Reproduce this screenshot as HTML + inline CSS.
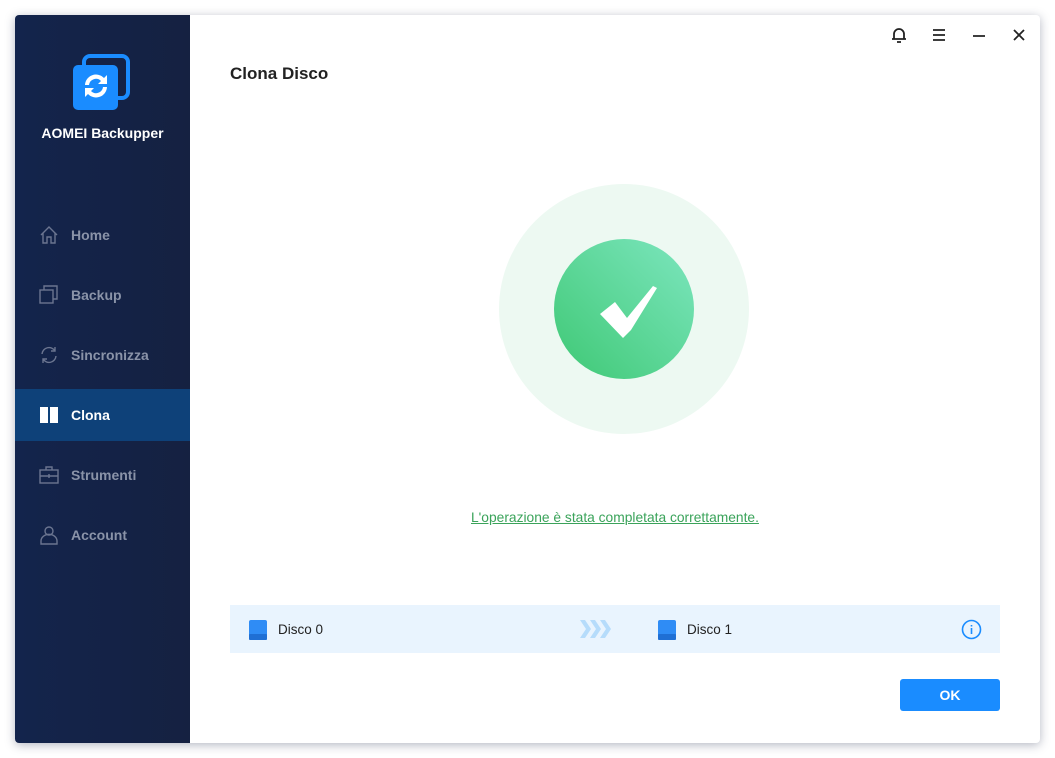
<!DOCTYPE html>
<html><head><meta charset="utf-8"><style>
*{margin:0;padding:0;box-sizing:border-box}
body{width:1055px;height:758px;background:#fff;font-family:"Liberation Sans",sans-serif;position:relative;overflow:hidden}
.win{position:absolute;left:15px;top:15px;width:1025px;height:728px;background:#fff;border-radius:4px;box-shadow:0 2px 10px rgba(40,50,80,.35);overflow:hidden}
.side{position:absolute;left:0;top:0;width:175px;height:728px;background:linear-gradient(90deg,#13244c,#152141)}
.brand{position:absolute;top:110px;left:0;width:175px;text-align:center;color:#fff;font-weight:bold;font-size:14px}
.item{position:absolute;left:0;width:175px;height:52px;color:#8a93a8;font-size:14px;font-weight:bold;line-height:52px;padding-left:56px}
.item svg{position:absolute;left:24px;top:16px}
.item.act{background:#0e4179;color:#fff}
.title{position:absolute;left:215px;top:49px;font-size:17px;font-weight:bold;color:#222}
.ctl{position:absolute;top:11px}
.msg{position:absolute;left:456px;top:495px;font-size:13.8px;color:#3aa35a;text-decoration:underline}
.bar{position:absolute;left:215px;top:590px;width:770px;height:48px;background:#e9f4fe}
.bar span{position:absolute;top:17px;font-size:13.5px;color:#222}
.ok{position:absolute;left:885px;top:664px;width:100px;height:32px;background:#1a8cff;border-radius:3px;color:#fff;font-weight:bold;font-size:14px;text-align:center;line-height:32px}
</style></head><body>
<div class="win">
<div class="side">
<svg style="position:absolute;left:58px;top:39px" width="58" height="58" viewBox="0 0 58 58">
<rect x="11" y="2" width="44" height="42" rx="6" fill="none" stroke="#1a8cff" stroke-width="4"/>
<rect x="0" y="11" width="45" height="45" rx="5" fill="#1a8cff"/>
<path d="M12 31a11 11 0 0 1 19-7l3-3v9h-9l3-3a7 7 0 0 0-12 4z" fill="#fff"/>
<path d="M34 33a11 11 0 0 1-19 7l-3 3v-9h9l-3 3a7 7 0 0 0 12-4z" fill="#fff"/>
</svg>
<div class="brand">AOMEI Backupper</div>
<div class="item" style="top:194px"><svg width="20" height="20" viewBox="0 0 20 20" fill="none" stroke="#6b7590" stroke-width="1.4"><path d="M2 10L10 2l8 8M4 8v10h4v-6h4v6h4V8"/></svg>Home</div>
<div class="item" style="top:254px"><svg width="20" height="20" viewBox="0 0 20 20" fill="none" stroke="#6b7590" stroke-width="1.4"><rect x="1" y="5" width="13" height="13"/><path d="M5 5V1h13v13h-4"/></svg>Backup</div>
<div class="item" style="top:314px"><svg width="20" height="20" viewBox="0 0 20 20" fill="none" stroke="#6b7590" stroke-width="1.4"><path d="M3 9a7 7 0 0 1 13-3M17 11a7 7 0 0 1-13 3M16 2v4h-4M4 18v-4h4"/></svg>Sincronizza</div>
<div class="item act" style="top:374px"><svg width="20" height="20" viewBox="0 0 20 20" fill="#fff"><path d="M1 2h8v16H1zM11 2h8v16h-8z"/></svg>Clona</div>
<div class="item" style="top:434px"><svg width="20" height="20" viewBox="0 0 20 20" fill="none" stroke="#6b7590" stroke-width="1.4"><rect x="1" y="5" width="18" height="13"/><path d="M7 5V2h6v3M1 11h18M10 9v4"/></svg>Strumenti</div>
<div class="item" style="top:494px"><svg width="20" height="20" viewBox="0 0 20 20" fill="none" stroke="#6b7590" stroke-width="1.4"><circle cx="10" cy="6" r="4"/><path d="M2 19v-3a6 5 0 0 1 16 0v3z"/></svg>Account</div>
</div>
<div class="title">Clona Disco</div>
<svg class="ctl" style="left:875px" width="18" height="18" viewBox="0 0 18 18" fill="none" stroke="#222" stroke-width="1.8"><path d="M4 13V8a5 5 0 0 1 10 0v5zM2 13h14M7 16h4"/></svg>
<svg class="ctl" style="left:915px" width="18" height="18" viewBox="0 0 18 18" stroke="#222" stroke-width="1.8"><path d="M3 4h12M3 9h12M3 14h12"/></svg>
<svg class="ctl" style="left:955px" width="18" height="18" viewBox="0 0 18 18" stroke="#222" stroke-width="1.8"><path d="M3 10h12"/></svg>
<svg class="ctl" style="left:995px" width="18" height="18" viewBox="0 0 18 18" stroke="#222" stroke-width="1.8"><path d="M4 4l10 10M14 4L4 14"/></svg>
<svg style="position:absolute;left:483px;top:168px" width="252" height="252" viewBox="0 0 252 252">
<defs><linearGradient id="g" x1="0" y1="1" x2="1" y2="0"><stop offset="0" stop-color="#3ec874"/><stop offset="1" stop-color="#7de6bf"/></linearGradient></defs>
<circle cx="126" cy="126" r="125" fill="#edf9f2"/>
<circle cx="126" cy="126" r="70" fill="url(#g)"/>
<path d="M102 131l15-12 12 16 26-32 4 2-26 42-8 8z" fill="#fff"/>
</svg>
<div class="msg">L'operazione è stata completata correttamente.</div>
<div class="bar">
<svg style="position:absolute;left:17px;top:14px" width="22" height="22" viewBox="0 0 22 22"><rect x="2" y="1" width="18" height="20" rx="2" fill="#2f8cf5"/><rect x="2" y="15" width="18" height="6" rx="1" fill="#1f6fd4"/></svg>
<span style="left:48px">Disco 0</span>
<svg style="position:absolute;left:350px;top:15px" width="32" height="18" viewBox="0 0 32 18" fill="#b6dcfb"><path d="M0 0h5l6 9-6 9H0l6-9zM10 0h5l6 9-6 9h-5l6-9zM20 0h5l6 9-6 9h-5l6-9z"/></svg>
<svg style="position:absolute;left:426px;top:14px" width="22" height="22" viewBox="0 0 22 22"><rect x="2" y="1" width="18" height="20" rx="2" fill="#2f8cf5"/><rect x="2" y="15" width="18" height="6" rx="1" fill="#1f6fd4"/></svg>
<span style="left:457px">Disco 1</span>
<svg style="position:absolute;left:731px;top:14px" width="21" height="21" viewBox="0 0 21 21" fill="none" stroke="#1a8cff" stroke-width="1.6"><circle cx="10.5" cy="10.5" r="9"/><path d="M10.5 9v6M10.5 6v1.5"/></svg>
</div>
<div class="ok">OK</div>
</div>
</body></html>
